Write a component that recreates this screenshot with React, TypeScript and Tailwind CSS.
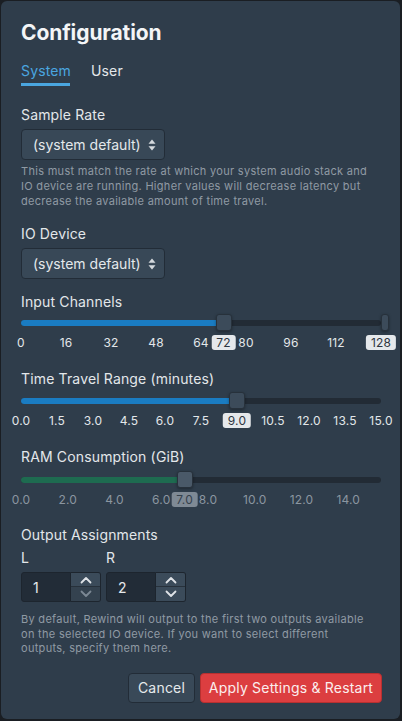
import React from "react";

const TRACK_W = 360;

function UpDown() {
  return (
    <svg width="8" height="12" viewBox="0 0 8 12" className="ml-[7px]">
      <path d="M4 0.5 L7.5 4.8 L0.5 4.8 Z" fill="#d5dade" />
      <path d="M4 11.5 L7.5 7.2 L0.5 7.2 Z" fill="#d5dade" />
    </svg>
  );
}

function Select() {
  return (
    <div className="mt-[4px] flex h-[31px] w-[144px] items-center rounded-[4px] border border-[#222c37] bg-[#384857] pl-[11px] text-[14px] text-[#e4e8eb]">
      <span>(system default)</span>
      <UpDown />
    </div>
  );
}

type Tick = { v: number; label: string; boxed?: boolean };

function Slider({
  min,
  max,
  value,
  fill,
  ticks,
  extraBox,
  endThumb,
  dim,
}: {
  min: number;
  max: number;
  value: number;
  fill: string;
  ticks: Tick[];
  extraBox?: Tick;
  endThumb?: boolean;
  dim?: boolean;
}) {
  const pos = (v: number) => ((v - min) / (max - min)) * TRACK_W;
  const x = pos(value);
  return (
    <div className="w-[360px]">
      <div className="relative h-[17px]">
        <div className="absolute left-0 top-[6px] h-[6px] w-[360px] rounded-full bg-[#222b35]" />
        <div
          className="absolute left-0 top-[6px] h-[6px] rounded-l-full"
          style={{ width: x, background: fill }}
        />
        <div
          className={
            "absolute top-0 h-[17px] w-[16px] rounded-[3px] border border-[#27313b] shadow-[0_1px_3px_rgba(0,0,0,0.35)] " +
            (dim ? "bg-[#4a5968]" : "bg-[#3c4b5a]")
          }
          style={{ left: x - 8 }}
        />
        {endThumb && (
          <div className="absolute left-[360px] top-0 h-[17px] w-[8px] rounded-[3px] border border-[#27313b] bg-[#3c4b5a] shadow-[0_1px_3px_rgba(0,0,0,0.35)]" />
        )}
      </div>
      <div className="relative mt-[4px] h-[15px]">
        {ticks.map((t) => (
          <div
            key={t.label}
            className={
              "absolute top-0 flex h-[15px] -translate-x-1/2 items-center text-[12px] leading-[15px] tracking-[0.2px] " +
              (t.boxed
                ? "rounded-[3px] bg-[#e5e8eb] px-[5px] text-[#2d3540]"
                : dim
                ? "text-[#8b96a0]"
                : "text-[#e3e7ea]")
            }
            style={{ left: pos(t.v) }}
          >
            {t.label}
          </div>
        ))}
        {extraBox && (
          <div
            className={
              "absolute top-0 flex h-[15px] -translate-x-1/2 items-center rounded-[3px] px-[5px] text-[12px] leading-[15px] tracking-[0.2px] " +
              (dim ? "bg-[#7f8a95] text-[#35414d]" : "bg-[#e5e8eb] text-[#2d3540]")
            }
            style={{ left: pos(extraBox.v) }}
          >
            {extraBox.label}
          </div>
        )}
      </div>
    </div>
  );
}

function Chevron({ up, color }: { up?: boolean; color: string }) {
  return (
    <svg width="12" height="8" viewBox="0 0 12 8">
      <polyline
        points={up ? "1.5,6.5 6,2 10.5,6.5" : "1.5,1.5 6,6 10.5,1.5"}
        fill="none"
        stroke={color}
        strokeWidth="1.8"
        strokeLinecap="round"
        strokeLinejoin="round"
      />
    </svg>
  );
}

function Spinner({ value, downDisabled }: { value: string; downDisabled?: boolean }) {
  return (
    <div className="flex h-[30px]">
      <div className="flex h-[30px] w-[50px] items-center rounded-l-[3px] border border-[#1d252e] bg-[#222c37] pl-[11px] text-[14px] text-[#e6e9ec]">
        {value}
      </div>
      <div className="flex w-[30px] flex-col overflow-hidden rounded-r-[3px] border border-l-0 border-[#1d252e]">
        <div className="flex h-[14px] items-center justify-center border-b border-[#27313b] bg-[#3b4b5a]">
          <Chevron up color="#dfe3e7" />
        </div>
        <div
          className={
            "flex flex-1 items-center justify-center " +
            (downDisabled ? "bg-[#34424f]" : "bg-[#3b4b5a]")
          }
        >
          <Chevron color={downDisabled ? "#7c8894" : "#dfe3e7"} />
        </div>
      </div>
    </div>
  );
}

export default function App() {
  const ic: Tick[] = [0, 16, 32, 48, 64, 80, 96, 112, 128].map((v) => ({
    v,
    label: String(v),
    boxed: v === 128,
  }));
  const tt: Tick[] = Array.from({ length: 11 }, (_, i) => {
    const v = i * 1.5;
    return { v, label: v.toFixed(1), boxed: v === 9 };
  });
  const ram: Tick[] = Array.from({ length: 8 }, (_, i) => {
    const v = i * 2;
    return { v, label: v.toFixed(1) };
  });

  const label = "text-[14px] leading-[20px] tracking-[0.15px] text-[#e3e7ea]";

  return (
    <div
      className="h-[721px] w-[402px] bg-[#1a1e23] pb-[2px] pl-[1px] pr-[2px] pt-[1px]"
      style={{ fontFamily: "Inter, 'Noto Sans', sans-serif" }}
    >
      <div className="flex h-full flex-col rounded-[6px] bg-[#2f3d4b] px-[20px] pt-[18px]">
        <div className="text-[21px] font-bold leading-[28px] tracking-[-0.1px] text-[#f3f5f7]">
          Configuration
        </div>

        <div className="mt-[14px] flex gap-[20px] text-[14px] leading-[20px] tracking-[0.15px]">
          <div className="flex flex-col">
            <span className="text-[#4aa6e0]">System</span>
            <div className="mt-[2px] h-[3px] w-[49px] bg-[#4aa6e0]" />
          </div>
          <span className="text-[#e3e7ea]">User</span>
        </div>

        <div className={"mt-[19px] " + label}>Sample Rate</div>
        <Select />
        <div className="mt-[4px] w-[356px] text-[11px] leading-[15px] tracking-[0.3px] text-[#8f9aa4]">
          This must match the rate at which your system audio stack and IO device are running.
          Higher values will decrease latency but decrease the available amount of time travel.
        </div>

        <div className={"mt-[15px] " + label}>IO Device</div>
        <Select />

        <div className={"mt-[13px] " + label}>Input Channels</div>
        <div className="mt-[2px]">
          <Slider
            min={0}
            max={128}
            value={72}
            fill="#1a7cc2"
            ticks={ic}
            extraBox={{ v: 72, label: "72" }}
            endThumb
          />
        </div>

        <div className={"mt-[19px] " + label}>Time Travel Range (minutes)</div>
        <div className="mt-[3px]">
          <Slider min={0} max={15} value={9} fill="#1a7cc2" ticks={tt} />
        </div>

        <div className={"mt-[19px] " + label}>RAM Consumption (GiB)</div>
        <div className="mt-[4px]">
          <Slider
            min={0}
            max={15.4}
            value={7}
            fill="#1e6b50"
            ticks={ram}
            extraBox={{ v: 7, label: "7.0" }}
            dim
          />
        </div>

        <div className={"mt-[18px] " + label}>Output Assignments</div>
        <div className="mt-[3px] flex gap-[5px]">
          <div className="flex flex-col">
            <div className={label}>L</div>
            <div className="mt-[4px]">
              <Spinner value="1" downDisabled />
            </div>
          </div>
          <div className="flex flex-col">
            <div className={label}>R</div>
            <div className="mt-[4px]">
              <Spinner value="2" />
            </div>
          </div>
        </div>
        <div className="mt-[10px] w-[352px] text-[11px] leading-[14.5px] tracking-[0.3px] text-[#8f9aa4]">
          By default, Rewind will output to the first two outputs available on the selected IO
          device. If you want to select different outputs, specify them here.
        </div>

        <div className="mt-[17px] flex w-[361px] justify-end gap-[5px]">
          <button className="h-[30px] w-[67px] rounded-[4px] border border-[#222c37] bg-[#394958] text-[14px] tracking-[0.2px] text-[#e6e9ec]">
            Cancel
          </button>
          <button className="h-[30px] w-[182px] rounded-[4px] border border-[#b83030] bg-[#dc3e40] text-[14px] tracking-[0.2px] text-[#fbeeee]">
            Apply Settings &amp; Restart
          </button>
        </div>
      </div>
    </div>
  );
}
